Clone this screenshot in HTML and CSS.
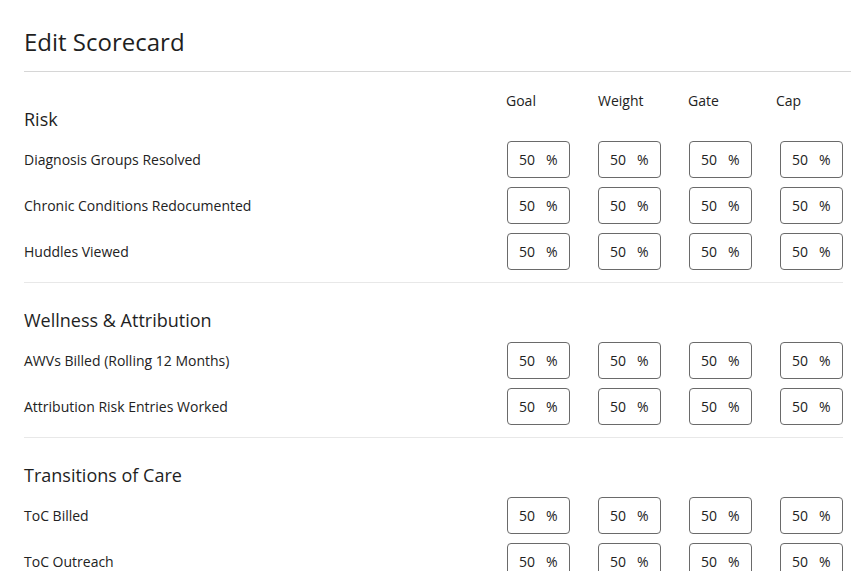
FILE: index.html
```html
<!DOCTYPE html>
<html>
<head>
<meta charset="utf-8">
<link rel="stylesheet" href="styles.css">
</head>
<body>
<div class="page">
  <header class="page-head">
    <h1 class="title">Edit Scorecard</h1>
  </header>

  <section class="section">
    <div class="grid col-heads">
      <span></span>
      <span class="ch">Goal</span>
      <span class="ch ch-weight">Weight</span>
      <span class="ch ch-gate">Gate</span>
      <span class="ch ch-cap">Cap</span>
    </div>
    <h2 class="section-title">Risk</h2>
    <div class="rows">
      <div class="grid row"><span class="label">Diagnosis Groups Resolved</span>
        <div class="box"><span>50</span><span>%</span></div><div class="box"><span>50</span><span>%</span></div><div class="box"><span>50</span><span>%</span></div><div class="box"><span>50</span><span>%</span></div></div>
      <div class="grid row"><span class="label">Chronic Conditions Redocumented</span>
        <div class="box"><span>50</span><span>%</span></div><div class="box"><span>50</span><span>%</span></div><div class="box"><span>50</span><span>%</span></div><div class="box"><span>50</span><span>%</span></div></div>
      <div class="grid row"><span class="label">Huddles Viewed</span>
        <div class="box"><span>50</span><span>%</span></div><div class="box"><span>50</span><span>%</span></div><div class="box"><span>50</span><span>%</span></div><div class="box"><span>50</span><span>%</span></div></div>
    </div>
  </section>

  <section class="section">
    <h2 class="section-title">Wellness &amp; Attribution</h2>
    <div class="rows">
      <div class="grid row"><span class="label">AWVs Billed (Rolling 12 Months)</span>
        <div class="box"><span>50</span><span>%</span></div><div class="box"><span>50</span><span>%</span></div><div class="box"><span>50</span><span>%</span></div><div class="box"><span>50</span><span>%</span></div></div>
      <div class="grid row"><span class="label">Attribution Risk Entries Worked</span>
        <div class="box"><span>50</span><span>%</span></div><div class="box"><span>50</span><span>%</span></div><div class="box"><span>50</span><span>%</span></div><div class="box"><span>50</span><span>%</span></div></div>
    </div>
  </section>

  <section class="section">
    <h2 class="section-title">Transitions of Care</h2>
    <div class="rows">
      <div class="grid row"><span class="label">ToC Billed</span>
        <div class="box"><span>50</span><span>%</span></div><div class="box"><span>50</span><span>%</span></div><div class="box"><span>50</span><span>%</span></div><div class="box"><span>50</span><span>%</span></div></div>
      <div class="grid row"><span class="label">ToC Outreach</span>
        <div class="box"><span>50</span><span>%</span></div><div class="box"><span>50</span><span>%</span></div><div class="box"><span>50</span><span>%</span></div><div class="box"><span>50</span><span>%</span></div></div>
    </div>
  </section>
</div>
</body>
</html>
```

FILE: styles.css
```css
html, body {
  margin: 0;
  padding: 0;
  background: #ffffff;
}
body {
  font-family: "Open Sans", "Liberation Sans", sans-serif;
  color: #222222;
  overflow: hidden;
}
.page {
  padding: 26px 24px 0 24px;
}
.page-head {
  margin-right: -8px;
  border-bottom: 1px solid #d6d6d6;
  padding-bottom: 13px;
}
.title {
  margin: 0;
  font-size: 24px;
  line-height: 32px;
  font-weight: 400;
  color: #1f1f1f;
}
.grid {
  display: grid;
  grid-template-columns: 1fr 63px 63px 63px 63px;
  column-gap: 28px;
  align-items: center;
}
.col-heads {
  margin-top: 21px;
  font-size: 14px;
  line-height: 16px;
}
.ch {
  margin-left: -1px;
}
.ch-weight { margin-left: 0; }
.ch-gate { margin-left: -1px; }
.ch-cap { margin-left: -4px; }
.section {
  border-bottom: 1px solid #e8e8e8;
  padding-bottom: 12px;
}
.section + .section {
  padding-top: 27px;
}
.section-title {
  margin: 0;
  font-size: 18px;
  line-height: 20px;
  font-weight: 400;
  color: #1f1f1f;
}
.rows {
  margin-top: 12px;
  display: flex;
  flex-direction: column;
  gap: 9px;
}
.label {
  font-size: 14px;
  line-height: 20px;
}
.box {
  box-sizing: border-box;
  height: 37px;
  border: 1px solid #6a6a6a;
  border-radius: 4px;
  display: flex;
  align-items: center;
  gap: 11px;
  padding-left: 11px;
  font-size: 14px;
  color: #222222;
}
```
